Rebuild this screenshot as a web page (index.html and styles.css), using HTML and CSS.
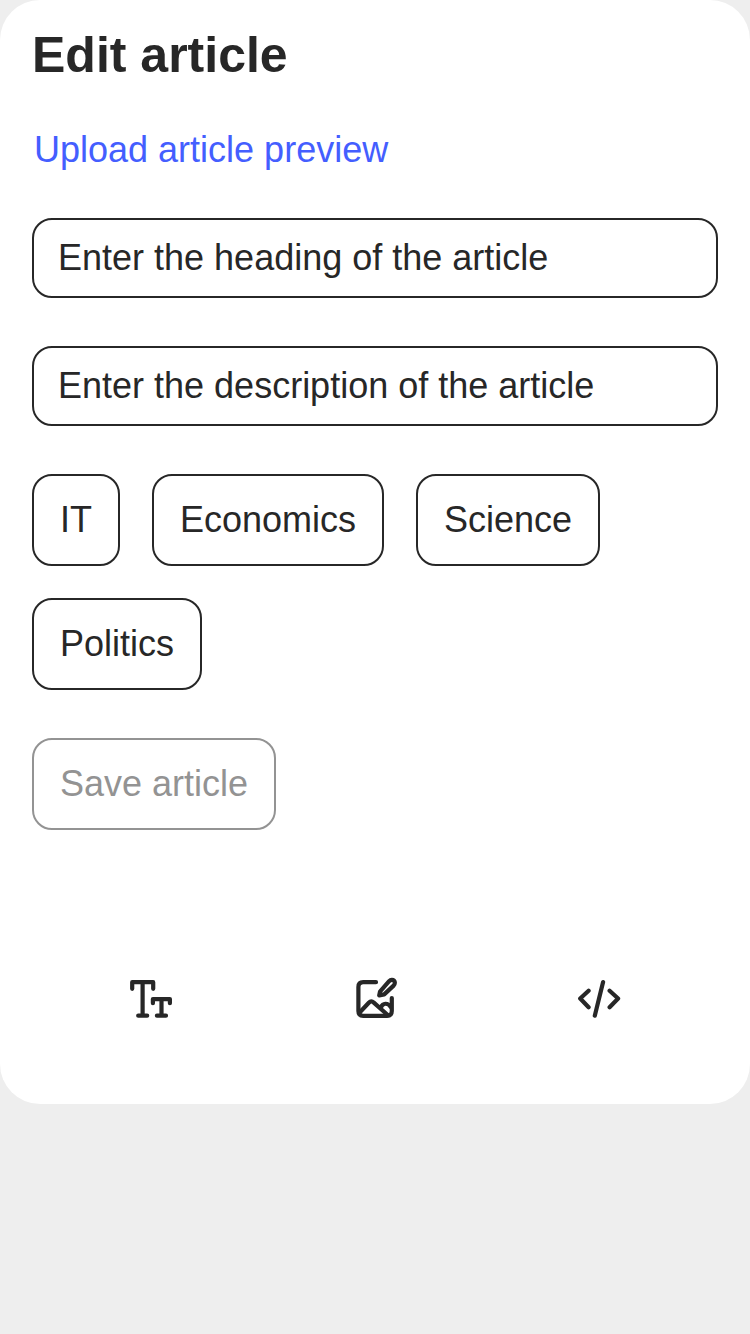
FILE: index.html
```html
<!DOCTYPE html>
<html lang="en">
<head>
<meta charset="utf-8">
<title>Edit article</title>
<link rel="stylesheet" href="styles.css">
</head>
<body>
<main class="card">
  <h1 class="title">Edit article</h1>
  <a class="upload">Upload article preview</a>
  <div class="field">Enter the heading of the article</div>
  <div class="field">Enter the description of the article</div>
  <div class="tags">
    <button class="button">IT</button>
    <button class="button">Economics</button>
    <button class="button">Science</button>
    <button class="button">Politics</button>
  </div>
  <button class="button save" disabled>Save article</button>
  <nav class="tools">
    <svg class="icon" viewBox="1 0 60 60" aria-label="Text">
      <path d="M12.2 18.8V12.2H33.2V18.8M22.6 12.2V45.7M18.2 45.7H27.2M32.9 33.2V29.1H49.9V33.2M41.5 29.1V45.7M36.9 45.7H46"/>
    </svg>
    <svg class="icon" viewBox="-1 0 60 60" aria-label="Image">
      <path d="M30 12.2H17.2Q12.4 12.2 12.4 17V41Q12.4 45.8 17.2 45.8H41Q45.8 45.8 45.8 41V28"/>
      <path d="M13.4 42.8L22.8 32.8Q25.2 30.2 27.8 32.6L42 45.2M34.9 37.4C36.8 32.8 41.6 32.4 44.8 37"/>
      <path d="M34 21.6L43.1 11.2C46.6 7.6 51.1 11.8 47.6 15.6L38.2 24.4L33.2 25.4Z"/>
    </svg>
    <svg class="icon" viewBox="-1 0 60 60" aria-label="Code">
      <path d="M18.6 20.7L10.2 28.5L18.6 37.2M33.1 12.1L24.8 45.7M39.6 20.7L48.1 28.5L39.6 37.2"/>
    </svg>
  </nav>
</main>
</body>
</html>
```
FILE: styles.css
```css
* {
  box-sizing: border-box;
}

body {
  margin: 0;
  background: #eee;
  color: #272727;
  font: 36px/40px "Liberation Sans", Arial, sans-serif;
}

.card {
  display: flex;
  flex-direction: column;
  align-items: flex-start;
  height: 1104px;
  padding: 26px 32px 0;
  border-radius: 40px;
  background: #fff;
}

.title {
  margin: 0;
  font-size: 50px;
  line-height: 58px;
}

.upload {
  margin: 46px 0 48px 2px;
  color: #445eff;
}

.field {
  width: 100%;
  height: 80px;
  margin-bottom: 48px;
  padding: 18px 24px;
  border: 2px solid #272727;
  border-radius: 20px;
}

.tags {
  display: flex;
  flex-wrap: wrap;
  gap: 32px;
}

.button {
  height: 92px;
  padding: 24px 26px;
  border: 2px solid #272727;
  border-radius: 20px;
  background: none;
  color: #272727;
  font: inherit;
}

.save {
  margin-top: 48px;
  border-color: #939393;
  color: #939393;
}

.tools {
  display: flex;
  justify-content: space-around;
  width: 672px;
  margin: 140px 0 0 7px;
}

.icon {
  width: 60px;
  height: 60px;
  fill: none;
  stroke: #272727;
  stroke-width: 4.2;
  stroke-linecap: round;
  stroke-linejoin: round;
}
```
